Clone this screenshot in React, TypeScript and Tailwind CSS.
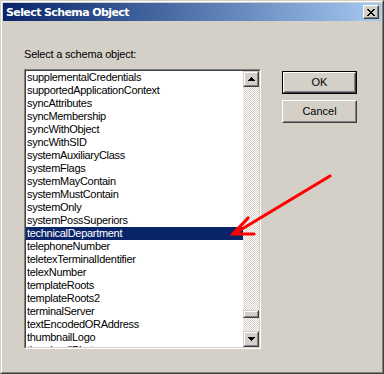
import React from "react";

const items = [
  "supplementalCredentials",
  "supportedApplicationContext",
  "syncAttributes",
  "syncMembership",
  "syncWithObject",
  "syncWithSID",
  "systemAuxiliaryClass",
  "systemFlags",
  "systemMayContain",
  "systemMustContain",
  "systemOnly",
  "systemPossSuperiors",
  "technicalDepartment",
  "telephoneNumber",
  "teletexTerminalIdentifier",
  "telexNumber",
  "templateRoots",
  "templateRoots2",
  "terminalServer",
  "textEncodedORAddress",
  "thumbnailLogo",
  "thumbnailPhoto",
];

function ScrollButton({ up }: { up: boolean }) {
  return (
    <div className="w-[16px] h-[16px] shrink-0 border border-t-[#d4d0c8] border-l-[#d4d0c8] border-b-[#404040] border-r-[#404040]">
      <div className="w-full h-full border border-t-white border-l-white border-b-[#808080] border-r-[#808080] bg-[#d4d0c8] flex items-center justify-center">
        <svg width="7" height="4" viewBox="0 0 7 4" shapeRendering="crispEdges">
          {up ? (
            <path d="M3 0h1v1h1v1h1v1h1v1H0V3h1V2h1V1h1z" fill="#000" />
          ) : (
            <path d="M0 0h7v1H6v1H5v1H4v1H3V3H2V2H1V1H0z" fill="#000" />
          )}
        </svg>
      </div>
    </div>
  );
}

function Button({ label, isDefault }: { label: string; isDefault?: boolean }) {
  if (isDefault) {
    return (
      <div className="w-[75px] h-[23px] border border-black">
        <div className="w-full h-full border border-t-white border-l-white border-b-[#404040] border-r-[#404040]">
          <div className="w-full h-full border border-t-[#d4d0c8] border-l-[#d4d0c8] border-b-[#808080] border-r-[#808080] flex items-center justify-center text-[11px] leading-[13px] text-black">
            {label}
          </div>
        </div>
      </div>
    );
  }
  return (
    <div className="w-[75px] h-[23px] border border-t-white border-l-white border-b-[#404040] border-r-[#404040]">
      <div className="w-full h-full border border-t-[#d4d0c8] border-l-[#d4d0c8] border-b-[#808080] border-r-[#808080] flex items-center justify-center text-[11px] leading-[13px] text-black">
        {label}
      </div>
    </div>
  );
}

export default function App() {
  return (
    <div className="relative w-[384px] h-[374px] bg-[#d4d0c8] border border-t-[#d4d0c8] border-l-[#d4d0c8] border-b-[#404040] border-r-[#404040] font-['Liberation_Sans',Arial,sans-serif]">
      <div className="w-full h-full border border-t-white border-l-white border-b-[#808080] border-r-[#808080] p-[1px] flex flex-col">
        {/* Title bar */}
        <div className="h-[18px] shrink-0 bg-linear-to-r from-[#0a246a] to-[#a6caf0] flex items-center justify-between pl-[3px] pr-[2px]">
          <span className="font-['DejaVu_Sans',sans-serif] font-bold text-[11px] tracking-[-0.6px] leading-[13px] text-white whitespace-nowrap">
            Select Schema Object
          </span>
          <div className="w-[16px] h-[14px] border border-t-white border-l-white border-b-[#404040] border-r-[#404040]">
            <div className="w-full h-full border border-t-[#d4d0c8] border-l-[#d4d0c8] border-b-[#808080] border-r-[#808080] bg-[#d4d0c8] flex items-center justify-center">
              <svg width="8" height="7" viewBox="0 0 8 7" shapeRendering="crispEdges">
                <path
                  d="M0 0h2v1h1v1h2V1h1V0h2v1H7v1H6v1H5v1h1v1h1v1h1v1H6V6H5V5H3v1H2v1H0V6h1V5h1V4h1V3H2V2H1V1H0z"
                  fill="#000"
                />
              </svg>
            </div>
          </div>
        </div>

        {/* Content */}
        <div className="flex pl-[21px] pt-[27px] text-[11px] text-black">
          <div className="flex flex-col">
            <div className="h-[13px] leading-[13px] tracking-[-0.2px] whitespace-nowrap">Select a schema object:</div>
            <div className="mt-[8px] w-[237px] h-[280px] border border-t-[#808080] border-l-[#808080] border-b-white border-r-white">
              <div className="w-full h-full border border-t-[#404040] border-l-[#404040] border-b-[#d4d0c8] border-r-[#d4d0c8] flex">
                <div className="flex-1 bg-white overflow-hidden">
                  {items.map((it) => {
                    const sel = it === "technicalDepartment";
                    return (
                      <div
                        key={it}
                        className={
                          sel
                            ? "h-[13px] leading-[13px] pl-[1px] whitespace-nowrap tracking-[-0.3px] bg-[#0a246a] text-white"
                            : "h-[13px] leading-[13px] pl-[1px] whitespace-nowrap tracking-[-0.3px] text-black"
                        }
                      >
                        {it}
                      </div>
                    );
                  })}
                </div>
                <div className="w-[16px] flex flex-col bg-[image:repeating-conic-gradient(#ffffff_0%_25%,#d4d0c8_0%_50%)] bg-[length:2px_2px]">
                  <ScrollButton up />
                  <div className="mt-[223px] w-[16px] h-[8px] border border-t-[#d4d0c8] border-l-[#d4d0c8] border-b-[#404040] border-r-[#404040]">
                    <div className="w-full h-full border border-t-white border-l-white border-b-[#808080] border-r-[#808080] bg-[#d4d0c8]" />
                  </div>
                  <div className="mt-auto">
                    <ScrollButton up={false} />
                  </div>
                </div>
              </div>
            </div>
          </div>
          <div className="ml-[21px] mt-[23px] flex flex-col gap-[6px]">
            <Button label="OK" isDefault />
            <Button label="Cancel" />
          </div>
        </div>
      </div>

      {/* Red annotation arrow */}
      <svg
        className="absolute left-0 top-0 pointer-events-none"
        width="384"
        height="374"
        viewBox="0 0 384 374"
      >
        <path d="M329 175 L236 231" stroke="#ff0000" strokeWidth="3.2" strokeLinecap="round" fill="none" />
        <path d="M247 217 L232 233 L253 233" stroke="#ff0000" strokeWidth="3.2" strokeLinejoin="miter" strokeLinecap="round" fill="none" />
      </svg>
    </div>
  );
}
